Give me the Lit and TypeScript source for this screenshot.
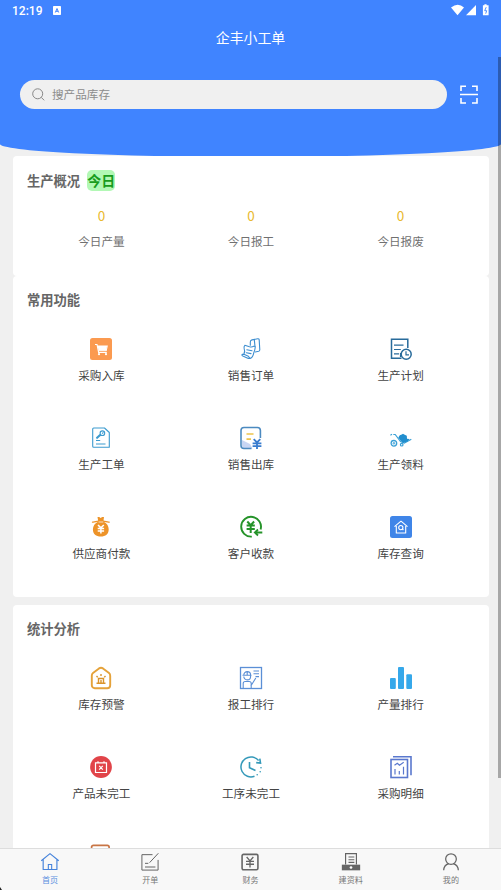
import { LitElement, html, svg, css } from "lit";
import { customElement, property } from "lit/decorators.js";

const icons: Record<string, unknown> = {
  cart: svg`<rect x="1" y="1" width="22" height="22" rx="2.5" fill="#fb9a50"/>
    <path d="M6 7.5h2l1.6 8h8.2M8.6 9h9.6l-1 4.8H9.2" fill="none" stroke="#fff" stroke-width="1.1"/>
    <path d="M8.7 9h9.3l-1 4.5H9.5z" fill="#fff"/><circle cx="10" cy="17.2" r="1.1" fill="#fff"/><circle cx="17" cy="17.2" r="1.1" fill="#fff"/>`,
  order: svg`<g fill="none" stroke="#3d8ed0" stroke-width="1.1" stroke-linejoin="round" stroke-linecap="round">
    <path d="M11.3 8.3V5q0-1.7 1.6-2.1l5.8-1.1q1.4-.2 1.5 1.1l.6 9.8q0 1.2-1.1 1.5l-3.5.8M15.3 2.6l.7 6.9"/>
    <path d="M5.8 8.3l4.7 1.5q2.6.5 4.2-.5 1.6-.5 1.5 1.2-.3 3-1.5 5.6-.8 4.5-3.5 5.3-1.2.4-3-.4l-4.4-2q-1.6-.9-.6-1.6l1.7-.3q1.4-2.6.3-5.2-.6-2.6.6-3.6zM4.9 17.2l4.5 2 1.5 2.1M7.8 12.8l5.2 1M7.4 15.7l4.6.9"/></g>`,
  plan: svg`<g fill="none" stroke="#286b9b" stroke-width="1.5"><path d="M18.8 11V2.2H2.5v19.1h10"/><path d="M5 8.2h9.5M5 12.5h6.8M5 16.8h5" stroke-width="1.2"/>
    <circle cx="17.2" cy="17.3" r="5"/><path d="M17 14.3v3.5h3M11.5 20v-4" stroke-width="1.2"/></g>`,
  work: svg`<g fill="none" stroke="#3d9bcf" stroke-width="1.1" stroke-linejoin="round"><path d="M4.7 2h10.8l4.8 4.5v14.8H4.7a1 1 0 0 1-1-1V3a1 1 0 0 1 1-1z"/>
    <path d="M7 14.5h4.2M7 18h9.5" stroke-width="1.2"/><circle cx="13.4" cy="7.2" r="2.3"/><path d="m11.8 9-4.2 3.8M11 8.4 7.2 11.8M13 7.5l1.5-1"/></g>`,
  outbound: svg`<path d="M3 14v5q0 3.5 3.5 3.5h7L11 18z" fill="#c7d5f4"/><path d="M21.4 12V4.5a3 3 0 0 0-3-3H5a3 3 0 0 0-3 3v15a3 3 0 0 0 3 3h7.5" fill="none" stroke="#4c8ac0" stroke-width="1.6"/>
    <path d="M7.5 8H14.5M7.5 13.2h4.5" stroke="#edc34c" stroke-width="1.7"/><path d="m14.7 13.2 3.3 3.2 3.3-3.2M18 16.4v6.5M13.6 17.3h8.8M13.6 20.2h8.8" fill="none" stroke="#377bce" stroke-width="1.8"/>`,
  trolley: svg`<g fill="none" stroke="#3aa0d6"><circle cx="4.9" cy="17.3" r="2.8" stroke-width="1.3"/><circle cx="4.9" cy="17.3" r=".8"/><path d="M1.4 9.2 3 8.3M4.3 8.5h1.9l5.3 7 3.8 1.7 7-4" stroke-width="1.2"/><circle cx="12.7" cy="18.7" r="1.3" stroke-width="1.2"/></g>
    <path d="m9.3 11.5 1.5-2.3 2-.8 1.2-.7 1.2.8 2.6 1.2.2 3 2.5.2-2 2.7-4 1.3-2.7-2z" fill="#218ece"/>`,
  bag: svg`<path d="M8.5 2h1.7l1.4 1 1.6-1H15l-.5 3.6.7 1.4c2.5 1.2 4.5 4 4.5 7.2 0 5-3.1 7.3-7.9 7.3S3.9 19.200 3.900 14.200c0-3.2 2.200-6 4.700-7.200l.5-1.400z" fill="#ed9328"/>
    <path d="M3 7c2 .8 4.200-.8 6.300-.8h5c2.400 0 4.200 1.600 6.400.8" fill="none" stroke="#ed9328" stroke-width="1.300"/><path d="M9.500 7h4.800" stroke="#fff" stroke-width=".7"/><path d="m9 10 2.900 2.900 2.900-2.900M11.900 12.800v5.700M8.700 13.600h6.400M8.700 16.100h6.400" fill="none" stroke="#fff" stroke-width="1.500"/>`,
  receive: svg`<path d="M21.600 14.500A9.900 9.900 0 1 0 12.800 21.600" fill="none" stroke="#259329" stroke-width="1.900"/><path d="m8.300 6.500 3.400 3.700 3.400-3.700M11.700 10v8M7.600 10.600h8.200M7.600 13.900h8.200" fill="none" stroke="#259329" stroke-width="2"/>
    <path d="M23.300 17.500h-7M19 14.500l-3.200 3 3.200 3" fill="none" stroke="#259329" stroke-width="1.800"/>`,
  query: svg`<rect x="1" y="1" width="22" height="22" rx="2.500" fill="#3f85e8"/><g fill="none" stroke="#fff" stroke-width="1.100" stroke-linejoin="round"><path d="M5.500 11.700 12 6.200l6.500 5.500M7.300 11v7h9.400v-7"/><circle cx="11.800" cy="12.600" r="2.100"/><path d="m13.400 14 1 1"/></g>`,
  warning: svg`<path d="M2.800 9.700q0-1.700 1.200-2.600l6-4.700q2-1.400 4 0l6 4.700q1.200 1 1.200 2.600v9.500a3 3 0 0 1-3 3H5.800a3 3 0 0 1-3-3z" fill="none" stroke="#e5a23a" stroke-width="1.900"/>
    <path d="M9.500 17v-4.500h5V17M7.500 17.300h9M12 14v3M12 8v2M7.500 10l1.200 1.200M16.500 10l-1.200 1.200" fill="none" stroke="#da942c" stroke-width="1.400"/>`,
  worker: svg`<g fill="none" stroke="#5b8fd6" stroke-width="1.100"><rect x="1.500" y="1.500" width="21" height="21" stroke-width="1.300"/><path d="M3.500 9.200h9M4.800 9a3.400 3.400 0 0 1 6.800 0v1.500a3.400 3.400 0 0 1-6.800 0M8.200 5.500V9M4.200 22v-4.500q0-2 2-2h4q2 0 2 2V22M11.800 20l5-8M14.500 5h5.500M14.500 7.800H20M16.500 10.600H20"/></g>`,
  bars: svg`<g fill="#36a8ea"><rect x="1" y="12" width="5.800" height="11" rx="1"/><rect x="9" y="1" width="6" height="22" rx="1"/><rect x="17.300" y="8.200" width="5.700" height="14.800" rx="1"/></g>`,
  product: svg`<circle cx="12" cy="12" r="10.900" fill="#e14449"/><path d="M6.500 7.800h11v9.700h-11zM9 8V6.200M15 8V6.200M10.200 10.800l3.600 3.800M13.800 10.800l-3.600 3.800" fill="none" stroke="#fff" stroke-width="1.200"/>`,
  clock: svg`<path d="M15.500 21.300A10 10 0 1 1 19.600 5.500" fill="none" stroke="#3499b9" stroke-width="1.500"/><path d="M20.800 3.700 21.500 8l-4.300-.4M10.500 7v5.700l6 2.800" fill="none" stroke="#3499b9" stroke-width="1.600"/><g fill="#3499b9"><circle cx="22" cy="12.700" r=".8"/><circle cx="21.200" cy="16.800" r=".8"/><circle cx="18.200" cy="19.800" r=".8"/></g>`,
  report: svg`<g fill="none" stroke="#5a78ce" stroke-width="1.600"><rect x="2" y="4.500" width="16.500" height="18"/><path d="M4 1.700h18v18.500"/><path d="m5.500 10.300 2.800-2 2.200 2 4.200-3M6 14v5.500M10.300 16v3.500M14.500 11.800v7.700" stroke-width="1.200"/></g>`,
  box: svg`<rect x="2.600" y="1.300" width="17.500" height="20" rx="1.800" fill="none" stroke="#c87545" stroke-width="1.700"/>`,
  home: svg`<path d="M1.500 10.500 12 2l10.500 8.500M3.800 9v12h16.500V9" fill="none" stroke="#4683db" stroke-width="1.400" stroke-linejoin="round"/><path d="M10 21v-6h4v6" fill="none" stroke="#4683db" stroke-width="1.300"/>`,
  edit: svg`<path d="M15 3.200H2.300v18.500h19.400V9.500M22 1.500 11.500 12.800M6 13.600h4M6 18h12.500" fill="none" stroke="#646464" stroke-width="1.200"/>`,
  money: svg`<rect x="2.500" y="2.800" width="19" height="18.500" rx="1.700" fill="none" stroke="#666" stroke-width="1.900"/><path d="m8 6 4 4.600L16 6M12 10.500v8M7.200 11.200h9.600M7.200 14.700h9.600" fill="none" stroke="#666" stroke-width="1.600"/>`,
  data: svg`<path d="M5.500 15V2h13v13M9 6h7M9 9.300h7M9 12.500h7" fill="none" stroke="#646464" stroke-width="1.400"/><path d="M1 15.200h22V22H1z" fill="#666"/><circle cx="12" cy="18.600" r="1.600" fill="#fff"/>`,
  user: svg`<circle cx="12" cy="8.500" r="6.400" fill="none" stroke="#666" stroke-width="1.500"/><path d="M3.200 22c.2-4.400 2.800-7 6-8M20.800 22c-.2-4.400-2.800-7-6-8" fill="none" stroke="#666" stroke-width="1.500"/>`,
};

const common = [
  ["cart", "采购入库"], ["order", "销售订单"], ["plan", "生产计划"],
  ["work", "生产工单"], ["outbound", "销售出库"], ["trolley", "生产领料"],
  ["bag", "供应商付款"], ["receive", "客户收款"], ["query", "库存查询"],
];
const stats = [
  ["warning", "库存预警"], ["worker", "报工排行"], ["bars", "产量排行"],
  ["product", "产品未完工"], ["clock", "工序未完工"], ["report", "采购明细"],
  ["box", ""],
];
const tabs = [["home", "首页"], ["edit", "开单"], ["money", "财务"], ["data", "建资料"], ["user", "我的"]];

@customElement("ui-icon")
class UiIcon extends LitElement {
  @property() name = "";
  static styles = css`
    :host { display: block; width: 24px; height: 24px; }
    svg { display: block; width: 100%; height: 100%; }
  `;
  render() {
    return html`<svg viewBox="0 0 24 24">${icons[this.name]}</svg>`;
  }
}

@customElement("app-root")
class AppRoot extends LitElement {
  static styles = css`
    :host {
      display: flex; flex-direction: column; position: relative; box-sizing: border-box;
      width: 100%; height: 890px; overflow: hidden; background: #f0f0f0; color: #444;
      font: 11.6px/16px "Noto Sans CJK SC", "Noto Sans", sans-serif;
    }
    .hero {
      flex: none; height: 157px; background: #4084ff; color: #fff;
      border-radius: 0 0 50% 50% / 0 0 13px 13px;
    }
    .status { display: flex; align-items: center; height: 20px; padding: 0 11px 0 12px; }
    .time { font: 500 12px/20px Roboto, sans-serif; width: 30px; margin-top: 1px; }
    .badge { width: 8px; height: 9px; margin-left: 11px; margin-top: 1px; }
    .signals { width: 40px; height: 13px; margin-left: auto; }
    .title { height: 36px; margin: 0; text-align: center; font-size: 13.9px; font-weight: 400; line-height: 35px; }
    .searchrow { display: flex; align-items: center; margin-top: 24px; padding: 0 23px 0 20px; }
    .search {
      display: flex; align-items: center; box-sizing: border-box; width: 427px; height: 28.5px;
      padding-left: 12px; gap: 7px; border-radius: 15px; background: #f0f0f0; color: #8c8c8c;
    }
    .search span { margin-top: -1px; }
    .lens { width: 13px; height: 13px; }
    .scan { width: 18px; height: 19px; margin-left: auto; }
    .content { flex: 1; min-height: 0; margin: -1px 12px 0 13px; overflow: hidden; }
    .card { box-sizing: border-box; padding: 0 13.6px; border-radius: 4px; background: #fff; }
    .overview { height: 120px; }
    .common { height: 321px; }
    .stats { height: 380px; margin-top: 8px; }
    .heading {
      display: flex; align-items: center; gap: 7px; box-sizing: border-box; height: 50px; margin: 0 0 0 0.4px;
      padding-bottom: 2px; color: #666; font-size: 13.3px; font-weight: 700; line-height: 20px;
    }
    .overview .heading { padding-bottom: 1px; }
    .today { border-radius: 5px; background: #b2f8b5; color: #189c1c; font-size: 14px; line-height: 21px; }
    .grid { display: grid; grid-template-columns: repeat(3, 1fr); grid-auto-rows: 89px; }
    .cell { display: flex; flex-direction: column; align-items: center; padding-top: 11px; gap: 6px; color: #444; }
    .numbers { display: grid; grid-template-columns: repeat(3, 1fr); text-align: center; color: #707070; }
    .num { margin: 1px 0 10px; color: #e9b92e; font-size: 13.5px; }
    .tabs {
      display: grid; grid-template-columns: repeat(5, 1fr); flex: none; box-sizing: border-box;
      height: 42px; padding-top: 3px; border-top: 1px solid #ddd; background: #f8f8f8;
    }
    .tab { display: flex; flex-direction: column; align-items: center; color: #777; font-size: 8.1px; line-height: 12px; gap: 2px; }
    .tab ui-icon { width: 20px; height: 20px; }
    .tab.active { color: #5a8fe0; }
    .thumb { position: absolute; top: 57px; right: 0; width: 3px; height: 721px; background: rgba(0, 0, 0, 0.3); }
    .corner { position: absolute; left: 0; bottom: 0; width: 2px; height: 3px; }
  `;

  grid(items: string[][]) {
    return html`<div class="grid">
      ${items.map(([icon, label]) => html`<div class="cell"><ui-icon name=${icon}></ui-icon><span>${label}</span></div>`)}
    </div>`;
  }

  render() {
    return html`
      <header class="hero">
        <div class="status">
          <span class="time">12:19</span>
          <svg class="badge" viewBox="0 0 8 9"><rect width="8" height="9" rx=".7" fill="#fff"/><path d="M2.300 6.500 4 2.500l1.700 4M3 5.300h2" fill="none" stroke="#4084ff"/></svg>
          <svg class="signals" viewBox="0 0 40 13"><path d="M1 3.400Q8 -1.800 14 3.400L7.500 11.300zM16 11.300 26 1v10.300zM32.900 1.200h1.500V.3h2.200v.9h2v10.100h-5.700z" fill="#fff"/><path d="m36.200 3.200-1.500 3.500h2l-1 3" fill="none" stroke="#4084ff" stroke-width=".9"/></svg>
        </div>
        <h1 class="title">企丰小工单</h1>
        <div class="searchrow">
          <div class="search">
            <svg class="lens" viewBox="0 0 13 13"><g fill="none" stroke="#888"><circle cx="5.700" cy="5.800" r="5"/><path d="m9.200 9.300 3 3"/></g></svg>
            <span>搜产品库存</span>
          </div>
          <svg class="scan" viewBox="0 0 18 19"><path d="M1 6V1.200h5M12 1.200h5V6M1 13v5h5M12 18h5v-5M0 9.500h18" fill="none" stroke="#fff" stroke-width="1.600"/></svg>
        </div>
      </header>
      <main class="content">
        <section class="card overview">
          <h2 class="heading">生产概况<span class="today">今日</span></h2>
          <div class="numbers">
            ${["今日产量", "今日报工", "今日报废"].map((label) => html`<div><div class="num">0</div>${label}</div>`)}
          </div>
        </section>
        <section class="card common"><h2 class="heading">常用功能</h2>${this.grid(common)}</section>
        <section class="card stats"><h2 class="heading">统计分析</h2>${this.grid(stats)}</section>
      </main>
      <nav class="tabs">
        ${tabs.map(([icon, label], i) => html`<div class="tab ${i === 0 ? "active" : ""}"><ui-icon name=${icon}></ui-icon><span>${label}</span></div>`)}
      </nav>
      <div class="thumb"></div>
      <svg class="corner" viewBox="0 0 2 3"><path d="M0 0 2 3H0z" fill="#222"/></svg>
    `;
  }
}
